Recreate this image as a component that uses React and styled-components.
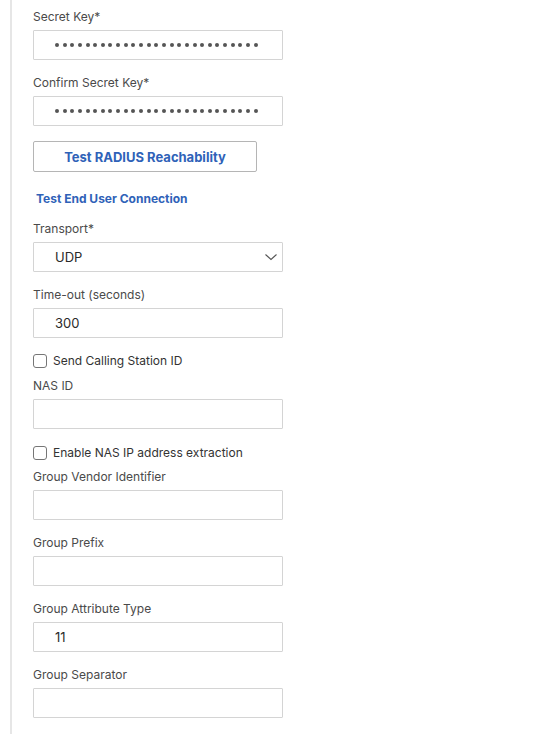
import React from 'react';
import styled, { createGlobalStyle } from 'styled-components';

const GlobalStyle = createGlobalStyle`
  body {
    margin: 0;
    background: #ffffff;
    font-family: 'Inter', 'Liberation Sans', sans-serif;
  }
`;

const Page = styled.div`
  display: flex;
  width: 540px;
  height: 734px;
  overflow: hidden;
`;

const Rail = styled.div`
  width: 10px;
  flex-shrink: 0;
  border-right: 2px solid #e6e6e6;
`;

const Form = styled.div`
  display: flex;
  flex-direction: column;
  padding: 9px 0 0 21px;
`;

const Field = styled.div`
  display: flex;
  flex-direction: column;
  margin-bottom: ${(p) => p.gap ?? 15}px;
`;

const Label = styled.label`
  font-size: 12px;
  line-height: 16px;
  color: #4a4a4a;
  margin-bottom: 5px;
`;

const Box = styled.div`
  box-sizing: border-box;
  width: 250px;
  height: 30px;
  border: 1px solid #d4d4d4;
  border-radius: 1px;
  display: flex;
  align-items: center;
  padding: 0 21px;
  font-size: 13px;
  color: #2a2a2a;
  position: relative;
`;

const Dots = styled.div`
  display: flex;
  gap: 3.65px;
`;

const Dot = styled.span`
  width: 4px;
  height: 4px;
  border-radius: 50%;
  background: #555;
`;

const Chevron = styled.svg`
  position: absolute;
  right: 4px;
  top: 9px;
`;

const Button = styled.button`
  box-sizing: border-box;
  width: 224px;
  height: 31px;
  border: 1px solid #b5b5b5;
  border-radius: 2px;
  background: #fff;
  color: #2f62b8;
  font-family: inherit;
  font-weight: 700;
  font-size: 13px;
  margin: 0 0 19px;
  padding: 0;
`;

const LinkText = styled.a`
  color: #2f62b8;
  font-weight: 700;
  font-size: 12px;
  line-height: 16px;
  margin: 0 0 14px 3px;
`;

const CheckRow = styled.div`
  display: flex;
  align-items: center;
  gap: 6px;
  height: 15px;
  font-size: 12px;
  color: #333;
  margin-bottom: ${(p) => p.gap ?? 9}px;
`;

const Check = styled.span`
  box-sizing: border-box;
  width: 14px;
  height: 14px;
  border: 1.5px solid #767676;
  border-radius: 3px;
`;

const Password = () => (
  <Box>
    <Dots>
      {Array.from({ length: 27 }).map((_, i) => (
        <Dot key={i} />
      ))}
    </Dots>
  </Box>
);

export default function App() {
  return (
    <Page>
      <GlobalStyle />
      <Rail />
      <Form>
        <Field>
          <Label>Secret Key*</Label>
          <Password />
        </Field>
        <Field>
          <Label>Confirm Secret Key*</Label>
          <Password />
        </Field>
        <Button>Test RADIUS Reachability</Button>
        <LinkText>Test End User Connection</LinkText>
        <Field>
          <Label>Transport*</Label>
          <Box>
            UDP
            <Chevron width="14" height="10" viewBox="0 0 14 10">
              <path d="M1.5 2.5 L7 7.5 L12.5 2.5" fill="none" stroke="#555" strokeWidth="1.1" />
            </Chevron>
          </Box>
        </Field>
        <Field gap={15}>
          <Label>Time-out (seconds)</Label>
          <Box>300</Box>
        </Field>
        <CheckRow gap={10}>
          <Check />
          Send Calling Station ID
        </CheckRow>
        <Field gap={16}>
          <Label>NAS ID</Label>
          <Box />
        </Field>
        <CheckRow gap={9}>
          <Check />
          Enable NAS IP address extraction
        </CheckRow>
        <Field>
          <Label>Group Vendor Identifier</Label>
          <Box />
        </Field>
        <Field>
          <Label>Group Prefix</Label>
          <Box />
        </Field>
        <Field>
          <Label>Group Attribute Type</Label>
          <Box>11</Box>
        </Field>
        <Field>
          <Label>Group Separator</Label>
          <Box />
        </Field>
      </Form>
    </Page>
  );
}
